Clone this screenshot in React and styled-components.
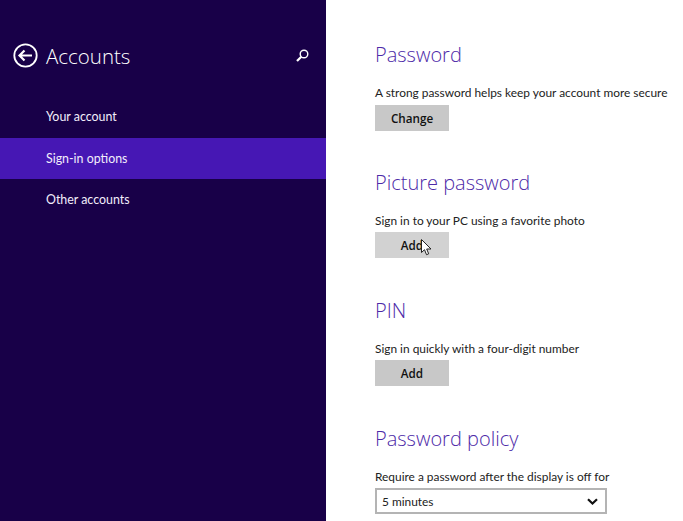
import React from 'react';
import styled, { createGlobalStyle } from 'styled-components';

const Global = createGlobalStyle`
html, body {
  margin: 0;
  padding: 0;
  overflow: hidden;
  background: #fff;
}
* { box-sizing: border-box; }
`;

const Page = styled.div`
display: flex;
width: 683px;
height: 521px;
overflow: hidden;
font-family: "Lato", "Open Sans", sans-serif;
`;

const Sidebar = styled.aside`
width: 326px;
flex-shrink: 0;
background: #180048;
color: #f2eefb;
`;

const SideHeader = styled.div`
display: flex;
align-items: center;
height: 97px;
padding: 14px 17px 0 13px;
`;

const BackButton = styled.svg`
width: 25px;
height: 25px;
margin-right: 8px;
`;

const SideTitle = styled.h1`
flex: 1;
margin: 0;
font-family: "Open Sans", sans-serif;
font-size: 20.5px;
font-weight: 300;
color: #fff;
`;

const SearchIcon = styled.svg`
width: 13px;
height: 13px;
`;

const NavRow = styled.div`
display: flex;
align-items: center;
height: 41px;
padding: 0 0 ${props => props.$first ? 2 : 1}px 46px;
font-size: 12.4px;
background: ${props => props.$active ? '#4617b4' : 'transparent'};
`;

const Main = styled.main`
position: relative;
flex: 1;
padding: 34px 0 0 49px;
`;

const Section = styled.section`
height: 128px;
`;

const Heading = styled.h2`
margin: 0;
height: 42px;
font-family: "Open Sans", sans-serif;
font-size: 20px;
line-height: 42px;
font-weight: 300;
color: #4d2aa8;
`;

const Description = styled.p`
margin: 8px 0 0;
height: 17px;
font-size: 11.9px;
line-height: 17px;
color: #222;
white-space: nowrap;
`;

const ActionButton = styled.button`
display: block;
width: 74px;
height: 26px;
margin-top: ${props => props.$tight ? 3 : 4}px;
padding: 0;
border: none;
background: ${props => props.$light ? '#d2d2d2' : '#c8c8c8'};
font-family: "Open Sans", sans-serif;
font-size: 11.7px;
font-weight: 600;
color: #111;
`;

const Select = styled.div`
display: flex;
align-items: center;
justify-content: space-between;
width: 232px;
height: 26px;
margin-top: 3px;
padding: 0 7px 0 5px;
border: 2px solid #b4b4b4;
background: #fff;
font-size: 11.9px;
color: #222;
`;

const Chevron = styled.svg`
width: 11px;
height: 7px;
`;

const Cursor = styled.svg`
position: absolute;
left: 95px;
top: 239px;
width: 11px;
height: 17px;
`;

const sections = [
  { title: 'Password', text: 'A strong password helps keep your account more secure', action: 'Change' },
  { title: 'Picture password', text: 'Sign in to your PC using a favorite photo', action: 'Add', light: true, tight: true },
  { title: 'PIN', text: 'Sign in quickly with a four-digit number', action: 'Add', tight: true },
];

export default function App() {
  return (
    <Page>
      <Global />
      <Sidebar>
        <SideHeader>
          <BackButton viewBox="0 0 25 25" fill="none" stroke="#fff">
            <circle cx="12.5" cy="12.5" r="11.2" strokeWidth="1.8" />
            <path d="M19 12.5H7M11.5 7.5l-5 5 5 5" strokeWidth="2.2" />
          </BackButton>
          <SideTitle>Accounts</SideTitle>
          <SearchIcon viewBox="0 0 13 13" fill="none" stroke="#fff">
            <circle cx="8" cy="5" r="3.8" strokeWidth="1.4" />
            <path d="M5.3 7.7 1 12" strokeWidth="2.2" />
          </SearchIcon>
        </SideHeader>
        <NavRow $first>Your account</NavRow>
        <NavRow $active>Sign-in options</NavRow>
        <NavRow>Other accounts</NavRow>
      </Sidebar>
      <Main>
        {sections.map(s => (
          <Section key={s.title}>
            <Heading>{s.title}</Heading>
            <Description>{s.text}</Description>
            <ActionButton $light={s.light} $tight={s.tight}>{s.action}</ActionButton>
          </Section>
        ))}
        <Section>
          <Heading>Password policy</Heading>
          <Description>Require a password after the display is off for</Description>
          <Select>
            5 minutes
            <Chevron viewBox="0 0 11 7" fill="none" stroke="#111">
              <path d="M1 1.2 5.5 5.5 10 1.2" strokeWidth="2.2" />
            </Chevron>
          </Select>
        </Section>
        <Cursor viewBox="0 0 11 17">
          <path d="M.5.5v13l3-2.8 2 5 2.2-.9-2-4.8h4.3z" fill="#fff" stroke="#222" strokeWidth="1" />
        </Cursor>
      </Main>
    </Page>
  );
}
